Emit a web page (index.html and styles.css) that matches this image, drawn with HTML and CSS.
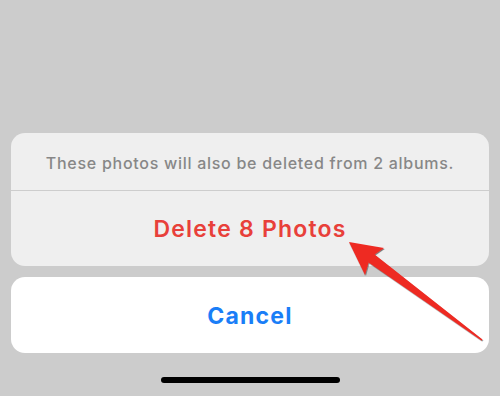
FILE: index.html
```html
<!DOCTYPE html>
<html>
<head>
<meta charset="utf-8">
<link rel="stylesheet" href="styles.css">
</head>
<body>
<div class="screen">
  <div class="sheet">
    <div class="group">
      <div class="message">These photos will also be deleted from 2 albums.</div>
      <div class="action destructive">Delete 8 Photos</div>
    </div>
    <div class="cancel">Cancel</div>
  </div>
  <div class="home-indicator"></div>
  <svg class="arrow" width="500" height="396" viewBox="0 0 500 396">
    <defs>
      <filter id="sh" x="-20%" y="-20%" width="140%" height="140%">
        <feDropShadow dx="0.6" dy="1" stdDeviation="0.6" flood-color="#000" flood-opacity="0.55"/>
      </filter>
    </defs>
    <polygon filter="url(#sh)" fill="#ee2a24" points="349,242 384,248 374.6,254.6 482.5,339.5 481.5,340.5 368.6,262.6 365,275"/>
  </svg>
</div>
</body>
</html>
```
FILE: styles.css
```css
html, body {
  margin: 0;
  padding: 0;
  background: #cccccc;
}
.screen {
  position: relative;
  width: 500px;
  height: 396px;
  overflow: hidden;
  font-family: Inter, "Noto Sans", sans-serif;
  display: flex;
  flex-direction: column;
  align-items: center;
}
.sheet {
  box-sizing: border-box;
  width: 100%;
  padding: 133px 11px 0;
  display: flex;
  flex-direction: column;
  gap: 11px;
}
.group {
  background: #efefef;
  border-radius: 14px;
  display: flex;
  flex-direction: column;
}
.message {
  height: 58px;
  display: flex;
  align-items: center;
  justify-content: center;
  color: #878787;
  font-size: 16px;
  font-weight: 500;
  letter-spacing: 0.72px;
  padding-top: 3px;
  box-sizing: border-box;
  border-bottom: 1px solid #cdcdcd;
}
.action {
  height: 75px;
  display: flex;
  align-items: center;
  justify-content: center;
  font-size: 23px;
  font-weight: 600;
  letter-spacing: 1.2px;
  padding-top: 1px;
  box-sizing: border-box;
}
.destructive {
  color: #e8403a;
}
.cancel {
  height: 76px;
  background: #ffffff;
  border-radius: 14px;
  display: flex;
  align-items: center;
  justify-content: center;
  color: #1a7ef7;
  font-size: 23px;
  font-weight: 700;
  letter-spacing: 1.2px;
  box-sizing: border-box;
  padding-top: 1px;
}
.home-indicator {
  margin-top: 24px;
  width: 179px;
  height: 6px;
  border-radius: 3px;
  background: #000;
}
.arrow {
  position: absolute;
  left: 0;
  top: 0;
}
```
